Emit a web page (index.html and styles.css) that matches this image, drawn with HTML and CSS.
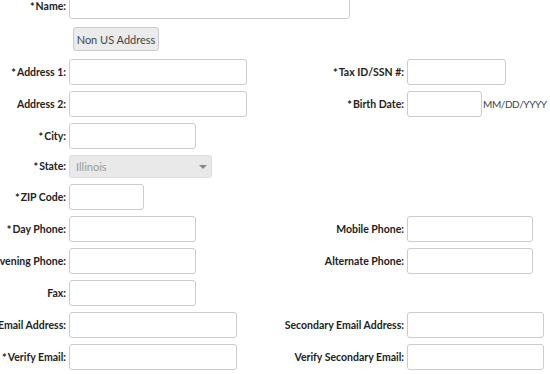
FILE: index.html
```html
<!DOCTYPE html>
<html lang="en">
<head>
  <meta charset="UTF-8">
  <title>Contact Information</title>
  <meta name="viewport" content="width=device-width, initial-scale=1.0">
  <link rel="stylesheet" href="styles.css">
</head>
<body>
  <form class="form">
    <label class="lbl" for="name"><span class="req">*</span>Name:</label>
    <div class="wide"><input class="field w-name" type="text" id="name"></div>

    <div class="wide"><button type="button" class="btn">Non US Address</button></div>

    <label class="lbl" for="addr1"><span class="req">*</span>Address 1:</label>
    <div><input class="field w-addr" type="text" id="addr1"></div>
    <label class="lbl" for="tax"><span class="req">*</span>Tax ID/SSN #:</label>
    <div><input class="field w-tax" type="text" id="tax"></div>

    <label class="lbl" for="addr2">Address 2:</label>
    <div><input class="field w-addr" type="text" id="addr2"></div>
    <label class="lbl" for="birth"><span class="req">*</span>Birth Date:</label>
    <div class="inline"><input class="field w-zip" type="text" id="birth"><span class="hint">MM/DD/YYYY</span></div>

    <label class="lbl" for="city"><span class="req">*</span>City:</label>
    <div class="wide"><input class="field w-mid" type="text" id="city"></div>

    <label class="lbl" for="state"><span class="req">*</span>State:</label>
    <div class="wide"><span class="select-wrap"><select class="select" id="state"><option>Illinois</option></select></span></div>

    <label class="lbl" for="zip"><span class="req">*</span>ZIP Code:</label>
    <div class="wide"><input class="field w-zip" type="text" id="zip"></div>

    <label class="lbl" for="day"><span class="req">*</span>Day Phone:</label>
    <div><input class="field w-mid" type="text" id="day"></div>
    <label class="lbl" for="mobile">Mobile Phone:</label>
    <div><input class="field w-mobile" type="text" id="mobile"></div>

    <label class="lbl" for="evening">Evening Phone:</label>
    <div><input class="field w-mid" type="text" id="evening"></div>
    <label class="lbl" for="alt">Alternate Phone:</label>
    <div><input class="field w-mobile" type="text" id="alt"></div>

    <label class="lbl" for="fax">Fax:</label>
    <div class="wide"><input class="field w-mid" type="text" id="fax"></div>

    <label class="lbl" for="email"><span class="req">*</span>Email Address:</label>
    <div><input class="field w-email" type="text" id="email"></div>
    <label class="lbl" for="email2">Secondary Email Address:</label>
    <div><input class="field w-email2" type="text" id="email2"></div>

    <label class="lbl" for="verify"><span class="req">*</span>Verify Email:</label>
    <div><input class="field w-email" type="text" id="verify"></div>
    <label class="lbl" for="verify2">Verify Secondary Email:</label>
    <div><input class="field w-email2" type="text" id="verify2"></div>
  </form>
</body>
</html>
```

FILE: styles.css
```css
body { margin: 0; background: #fff; color: #222; font-family: Lato, "Liberation Sans", sans-serif; overflow: hidden; }
.form { display: grid; grid-template-columns: 126px 208px 124px 143px; column-gap: 3px; row-gap: 6px; align-items: center; margin: -7px 0 0 -60px; }
.lbl { display: flex; justify-content: flex-end; font-size: 10.5px; font-weight: bold; white-space: nowrap; color: #222; }
.req { font-size: 11px; margin-right: 1px; }
.wide { grid-column: 2 / 5; }
.wide .btn { margin: 2px 0 2px 4px; }
.field { box-sizing: border-box; display: block; height: 26px; border: 1px solid #ccc; border-radius: 3px; background: #fff; padding: 0 6px; }
.w-name { width: 281px; }
.w-addr { width: 178px; }
.w-mid { width: 127px; }
.w-zip { width: 75px; }
.w-tax { width: 99px; }
.w-mobile { width: 126px; }
.w-email { width: 168px; }
.w-email2 { width: 137px; }
.inline { display: flex; align-items: center; gap: 1px; }
.hint { font-size: 10px; letter-spacing: -0.4px; color: #444; white-space: nowrap; }
.btn { box-sizing: border-box; height: 24px; width: 86px; padding: 0; border: 1px solid #ccc; border-radius: 3px; background: #ebebeb; color: #444; font-family: inherit; font-size: 11px; }
.select-wrap { position: relative; display: block; width: 143px; }
.select { box-sizing: border-box; display: block; width: 143px; height: 23px; -webkit-appearance: none; appearance: none; border: 1px solid #ddd; border-radius: 3px; background: #e9e9e9; color: #999; font-family: inherit; font-size: 11px; padding: 0 6px; }
.select-wrap::after { content: ""; position: absolute; right: 5px; top: 10px; border-left: 4px solid transparent; border-right: 4px solid transparent; border-top: 4px solid #888; }
```
